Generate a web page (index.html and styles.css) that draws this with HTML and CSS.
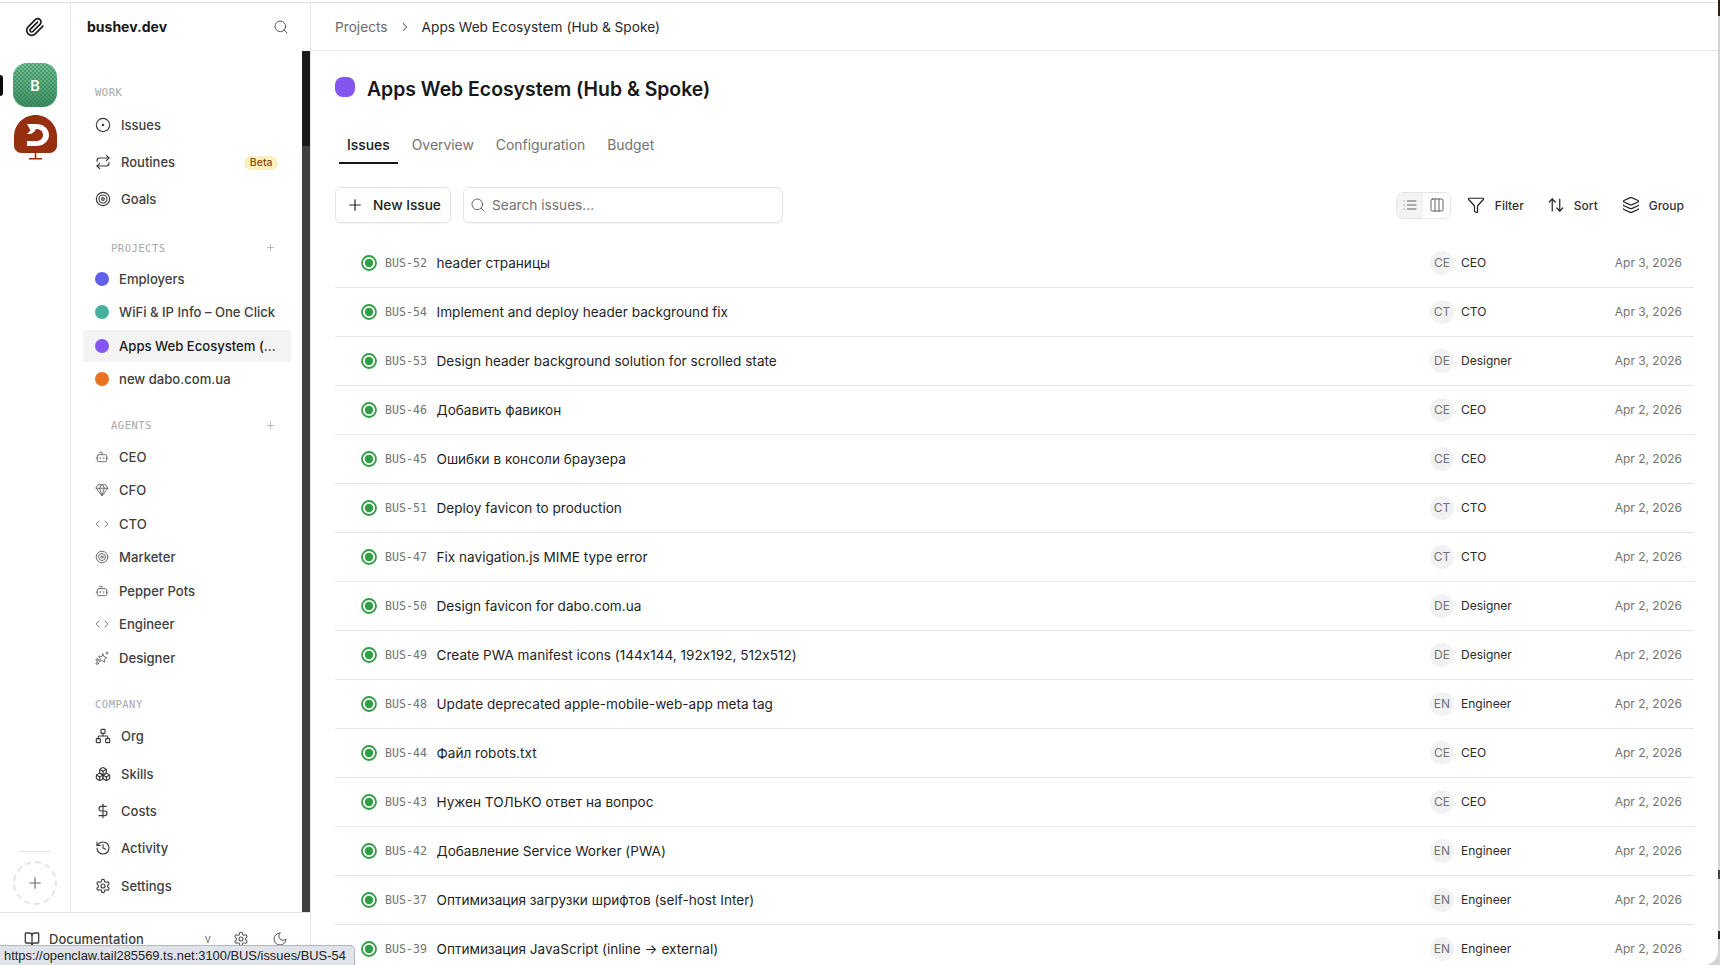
FILE: index.html
```html
<!DOCTYPE html>
<html lang="en">
<head>
<meta charset="utf-8">
<title>Apps Web Ecosystem (Hub &amp; Spoke)</title>
<link rel="stylesheet" href="styles.css">
</head>
<body>
<svg class="defs" aria-hidden="true">
<symbol id="i-clip" viewBox="0 0 24 24"><path d="m21.44 11.05-9.19 9.19a6 6 0 0 1-8.49-8.49l8.57-8.57A4 4 0 1 1 18 8.84l-8.59 8.57a2 2 0 0 1-2.83-2.83l8.49-8.48"/></symbol>
<symbol id="i-search" viewBox="0 0 24 24"><circle cx="11" cy="11" r="8"/><path d="m21 21-4.3-4.3"/></symbol>
<symbol id="i-issues" viewBox="0 0 24 24"><circle cx="12" cy="12" r="10"/><circle cx="12" cy="12" r="1"/></symbol>
<symbol id="i-repeat" viewBox="0 0 24 24"><path d="m17 2 4 4-4 4"/><path d="M3 11v-1a4 4 0 0 1 4-4h14"/><path d="m7 22-4-4 4-4"/><path d="M21 13v1a4 4 0 0 1-4 4H3"/></symbol>
<symbol id="i-target" viewBox="0 0 24 24"><circle cx="12" cy="12" r="10"/><circle cx="12" cy="12" r="6"/><circle cx="12" cy="12" r="2"/></symbol>
<symbol id="i-plus" viewBox="0 0 24 24"><path d="M5 12h14"/><path d="M12 5v14"/></symbol>
<symbol id="i-bot" viewBox="0 0 24 24"><path d="M12 8V4H8"/><rect x="4" y="8" width="16" height="12" rx="2"/><path d="M2 14h2"/><path d="M20 14h2"/><path d="M15 13v2"/><path d="M9 13v2"/></symbol>
<symbol id="i-gem" viewBox="0 0 24 24"><path d="M6 3h12l4 6-10 13L2 9Z"/><path d="M11 3 8 9l4 13 4-13-3-6"/><path d="M2 9h20"/></symbol>
<symbol id="i-code" viewBox="0 0 24 24"><path d="m17 17 5-5-5-5"/><path d="m7 7-5 5 5 5"/></symbol>
<symbol id="i-spark" viewBox="0 0 24 24"><path d="M13.5 5 15.4 9.6 20.4 11.2 16.4 14.2 16.6 19.4 12.4 16.4 7.6 18 9.2 13.2 6.2 9 11.4 9.2Z"/><path d="M20.5 1.5v4"/><path d="M18.5 3.5h4"/><circle cx="3.8" cy="15.2" r="2"/><circle cx="3.8" cy="21" r="2"/></symbol>
<symbol id="i-org" viewBox="0 0 24 24"><rect x="16" y="16" width="6" height="6" rx="1"/><rect x="2" y="16" width="6" height="6" rx="1"/><rect x="9" y="2" width="6" height="6" rx="1"/><path d="M5 16v-3a1 1 0 0 1 1-1h12a1 1 0 0 1 1 1v3"/><path d="M12 12V8"/></symbol>
<symbol id="i-boxes" viewBox="0 0 24 24"><path d="M2.97 12.92A2 2 0 0 0 2 14.63v3.24a2 2 0 0 0 .97 1.71l3 1.8a2 2 0 0 0 2.06 0L12 19v-5.5l-5-3-4.03 2.42Z"/><path d="m7 16.5-4.74-2.85"/><path d="m7 16.5 5-3"/><path d="M7 16.5v5.17"/><path d="M12 13.5V19l3.97 2.38a2 2 0 0 0 2.06 0l3-1.8a2 2 0 0 0 .97-1.71v-3.24a2 2 0 0 0-.97-1.71L17 10.5l-5 3Z"/><path d="m17 16.5-5-3"/><path d="m17 16.5 4.74-2.85"/><path d="M17 16.5v5.17"/><path d="M7.97 4.42A2 2 0 0 0 7 6.13v4.37l5 3 5-3V6.13a2 2 0 0 0-.97-1.71l-3-1.8a2 2 0 0 0-2.06 0l-3 1.8Z"/><path d="M12 8 7.26 5.15"/><path d="m12 8 4.74-2.85"/><path d="M12 13.5V8"/></symbol>
<symbol id="i-dollar" viewBox="0 0 24 24"><path d="M12 2v20"/><path d="M17 5H9.5a3.5 3.5 0 0 0 0 7h5a3.5 3.5 0 0 1 0 7H6"/></symbol>
<symbol id="i-history" viewBox="0 0 24 24"><path d="M3 12a9 9 0 1 0 9-9 9.75 9.75 0 0 0-6.74 2.74L3 8"/><path d="M3 3v5h5"/><path d="M12 7v5l4 2"/></symbol>
<symbol id="i-gear" viewBox="0 0 24 24"><path d="M12.22 2h-.44a2 2 0 0 0-2 2v.18a2 2 0 0 1-1 1.73l-.43.25a2 2 0 0 1-2 0l-.15-.08a2 2 0 0 0-2.73.73l-.22.38a2 2 0 0 0 .73 2.73l.15.1a2 2 0 0 1 1 1.72v.51a2 2 0 0 1-1 1.74l-.15.09a2 2 0 0 0-.73 2.73l.22.38a2 2 0 0 0 2.73.73l.15-.08a2 2 0 0 1 2 0l.43.25a2 2 0 0 1 1 1.73V20a2 2 0 0 0 2 2h.44a2 2 0 0 0 2-2v-.18a2 2 0 0 1 1-1.73l.43-.25a2 2 0 0 1 2 0l.15.08a2 2 0 0 0 2.73-.73l.22-.39a2 2 0 0 0-.73-2.73l-.15-.08a2 2 0 0 1-1-1.74v-.5a2 2 0 0 1 1-1.74l.15-.09a2 2 0 0 0 .73-2.73l-.22-.38a2 2 0 0 0-2.73-.73l-.15.08a2 2 0 0 1-2 0l-.43-.25a2 2 0 0 1-1-1.73V4a2 2 0 0 0-2-2z"/><circle cx="12" cy="12" r="3"/></symbol>
<symbol id="i-book" viewBox="0 0 24 24"><path d="M12 7v14"/><path d="M3 18a1 1 0 0 1-1-1V4a1 1 0 0 1 1-1h5a4 4 0 0 1 4 4 4 4 0 0 1 4-4h5a1 1 0 0 1 1 1v13a1 1 0 0 1-1 1h-6a3 3 0 0 0-3 3 3 3 0 0 0-3-3z"/></symbol>
<symbol id="i-moon" viewBox="0 0 24 24"><path d="M12 3a6 6 0 0 0 9 9 9 9 0 1 1-9-9Z"/></symbol>
<symbol id="i-chev" viewBox="0 0 24 24"><path d="m9 18 6-6-6-6"/></symbol>
<symbol id="i-list" viewBox="0 0 24 24"><path d="M3 12h.01"/><path d="M3 18h.01"/><path d="M3 6h.01"/><path d="M8 12h13"/><path d="M8 18h13"/><path d="M8 6h13"/></symbol>
<symbol id="i-cols" viewBox="0 0 24 24"><rect x="3" y="3" width="18" height="18" rx="2"/><path d="M9 3v18"/><path d="M15 3v18"/></symbol>
<symbol id="i-filter" viewBox="0 0 24 24"><path d="M10 20a1 1 0 0 0 .553.895l2 1A1 1 0 0 0 14 21v-7a2 2 0 0 1 .517-1.341L21.74 4.67A1 1 0 0 0 21 3H3a1 1 0 0 0-.742 1.67l7.225 7.989A2 2 0 0 1 10 14z"/></symbol>
<symbol id="i-sort" viewBox="0 0 24 24"><path d="m21 16-4 4-4-4"/><path d="M17 20V4"/><path d="m3 8 4-4 4 4"/><path d="M7 4v16"/></symbol>
<symbol id="i-layers" viewBox="0 0 24 24"><path d="M12.83 2.18a2 2 0 0 0-1.66 0L2.6 6.08a1 1 0 0 0 0 1.83l8.58 3.91a2 2 0 0 0 1.66 0l8.58-3.9a1 1 0 0 0 0-1.83z"/><path d="M2 12a1 1 0 0 0 .58.91l8.6 3.91a2 2 0 0 0 1.65 0l8.58-3.9A1 1 0 0 0 22 12"/><path d="M2 17a1 1 0 0 0 .58.91l8.6 3.91a2 2 0 0 0 1.65 0l8.58-3.9A1 1 0 0 0 22 17"/></symbol>
<symbol id="i-done" viewBox="0 0 16 16"><circle cx="8" cy="8" r="7" class="done-ring"/><circle cx="8" cy="8" r="4.2" class="done-dot"/></symbol>
</svg>

<div class="top-gap"></div>
<div class="window">
  <div class="left">
    <div class="left-top">
      <div class="rail">
        <svg class="ic rail-clip"><use href="#i-clip"/></svg>
        <div class="co co-b">B</div>
        <svg class="co-d" viewBox="0 0 43 45">
          <path class="d-red" d="M21.5 0C33.4 0 43 9.6 43 21.5v9C43 34.6 39.6 38 35.5 38h-28C3.4 38 0 34.6 0 30.5v-9C0 9.6 9.6 0 21.5 0Z"/>
          <path class="d-red" d="M20.7 37h1.600v6h-1.600zM15 43h13v1.400H15z"/>
          <path class="d-white" d="M13 9h9c7.500 0 13 4.800 13 11s-5.500 11-13 11h-9v-5h9c4.500 0 7-2.600 7-6s-2.500-6-7-6l-1.500 2.500L17 19h-4l3.500-3.500z"/>
        </svg>
        <div class="rail-space"></div>
        <div class="rail-sep"></div>
        <div class="rail-add"><svg class="ic"><use href="#i-plus"/></svg></div>
      </div>
      <aside class="side">
        <div class="side-head">
          <span class="brand">bushev.dev</span>
          <svg class="ic side-search"><use href="#i-search"/></svg>
        </div>
        <div class="side-scroll">
          <nav class="side-nav">
            <div class="label label-work">WORK</div>
            <a class="nav"><svg class="ic"><use href="#i-issues"/></svg>Issues</a>
            <a class="nav"><svg class="ic"><use href="#i-repeat"/></svg>Routines<span class="beta">Beta</span></a>
            <a class="nav"><svg class="ic"><use href="#i-target"/></svg>Goals</a>

            <div class="label label-sub label-projects"><span>PROJECTS</span><svg class="ic"><use href="#i-plus"/></svg></div>
            <a class="item"><span class="dot dot-indigo"></span>Employers</a>
            <a class="item"><span class="dot dot-teal"></span>WiFi &amp; IP Info – One Click</a>
            <a class="item active"><span class="dot dot-violet"></span>Apps Web Ecosystem (…</a>
            <a class="item"><span class="dot dot-orange"></span>new dabo.com.ua</a>

            <div class="label label-sub label-agents"><span>AGENTS</span><svg class="ic"><use href="#i-plus"/></svg></div>
            <a class="item"><svg class="ic"><use href="#i-bot"/></svg>CEO</a>
            <a class="item"><svg class="ic"><use href="#i-gem"/></svg>CFO</a>
            <a class="item"><svg class="ic"><use href="#i-code"/></svg>CTO</a>
            <a class="item"><svg class="ic"><use href="#i-target"/></svg>Marketer</a>
            <a class="item"><svg class="ic"><use href="#i-bot"/></svg>Pepper Pots</a>
            <a class="item"><svg class="ic"><use href="#i-code"/></svg>Engineer</a>
            <a class="item"><svg class="ic"><use href="#i-spark"/></svg>Designer</a>

            <div class="label label-company">COMPANY</div>
            <a class="nav"><svg class="ic"><use href="#i-org"/></svg>Org</a>
            <a class="nav"><svg class="ic"><use href="#i-boxes"/></svg>Skills</a>
            <a class="nav"><svg class="ic"><use href="#i-dollar"/></svg>Costs</a>
            <a class="nav"><svg class="ic"><use href="#i-history"/></svg>Activity</a>
            <a class="nav"><svg class="ic"><use href="#i-gear"/></svg>Settings</a>
          </nav>
          <div class="track"><div class="thumb"></div></div>
        </div>
      </aside>
    </div>
    <footer class="left-foot">
      <svg class="ic"><use href="#i-book"/></svg>
      <span class="doc">Documentation</span>
      <span class="ver">v</span>
      <svg class="ic foot-gear"><use href="#i-gear"/></svg>
      <svg class="ic foot-moon"><use href="#i-moon"/></svg>
    </footer>
  </div>

  <main class="main">
    <header class="crumbs">
      <span class="crumb">Projects</span>
      <svg class="ic crumb-chev"><use href="#i-chev"/></svg>
      <span class="crumb-now">Apps Web Ecosystem (Hub &amp; Spoke)</span>
    </header>
    <section class="content">
      <div class="title-row">
        <span class="swatch"></span>
        <h1 class="title">Apps Web Ecosystem (Hub &amp; Spoke)</h1>
      </div>
      <div class="tabs">
        <span class="tab on">Issues</span>
        <span class="tab">Overview</span>
        <span class="tab">Configuration</span>
        <span class="tab">Budget</span>
      </div>
      <div class="toolbar">
        <button class="btn-new"><svg class="ic"><use href="#i-plus"/></svg>New Issue</button>
        <div class="search"><svg class="ic"><use href="#i-search"/></svg><span>Search issues...</span></div>
        <div class="tools">
          <div class="toggle">
            <span class="tg on"><svg class="ic"><use href="#i-list"/></svg></span>
            <span class="tg"><svg class="ic"><use href="#i-cols"/></svg></span>
          </div>
          <span class="tool tool-filter"><svg class="ic"><use href="#i-filter"/></svg>Filter</span>
          <span class="tool tool-sort"><svg class="ic"><use href="#i-sort"/></svg>Sort</span>
          <span class="tool tool-group"><svg class="ic"><use href="#i-layers"/></svg>Group</span>
        </div>
      </div>
      <div class="rows">
        <div class="row"><svg class="st"><use href="#i-done"/></svg><span class="id">BUS-52</span><span class="t">header страницы</span><span class="av">CE</span><span class="who">CEO</span><span class="date">Apr 3, 2026</span></div>
        <div class="row"><svg class="st"><use href="#i-done"/></svg><span class="id">BUS-54</span><span class="t">Implement and deploy header background fix</span><span class="av">CT</span><span class="who">CTO</span><span class="date">Apr 3, 2026</span></div>
        <div class="row"><svg class="st"><use href="#i-done"/></svg><span class="id">BUS-53</span><span class="t">Design header background solution for scrolled state</span><span class="av">DE</span><span class="who">Designer</span><span class="date">Apr 3, 2026</span></div>
        <div class="row"><svg class="st"><use href="#i-done"/></svg><span class="id">BUS-46</span><span class="t">Добавить фавикон</span><span class="av">CE</span><span class="who">CEO</span><span class="date">Apr 2, 2026</span></div>
        <div class="row"><svg class="st"><use href="#i-done"/></svg><span class="id">BUS-45</span><span class="t">Ошибки в консоли браузера</span><span class="av">CE</span><span class="who">CEO</span><span class="date">Apr 2, 2026</span></div>
        <div class="row"><svg class="st"><use href="#i-done"/></svg><span class="id">BUS-51</span><span class="t">Deploy favicon to production</span><span class="av">CT</span><span class="who">CTO</span><span class="date">Apr 2, 2026</span></div>
        <div class="row"><svg class="st"><use href="#i-done"/></svg><span class="id">BUS-47</span><span class="t">Fix navigation.js MIME type error</span><span class="av">CT</span><span class="who">CTO</span><span class="date">Apr 2, 2026</span></div>
        <div class="row"><svg class="st"><use href="#i-done"/></svg><span class="id">BUS-50</span><span class="t">Design favicon for dabo.com.ua</span><span class="av">DE</span><span class="who">Designer</span><span class="date">Apr 2, 2026</span></div>
        <div class="row"><svg class="st"><use href="#i-done"/></svg><span class="id">BUS-49</span><span class="t">Create PWA manifest icons (144x144, 192x192, 512x512)</span><span class="av">DE</span><span class="who">Designer</span><span class="date">Apr 2, 2026</span></div>
        <div class="row"><svg class="st"><use href="#i-done"/></svg><span class="id">BUS-48</span><span class="t">Update deprecated apple-mobile-web-app meta tag</span><span class="av">EN</span><span class="who">Engineer</span><span class="date">Apr 2, 2026</span></div>
        <div class="row"><svg class="st"><use href="#i-done"/></svg><span class="id">BUS-44</span><span class="t">Файл robots.txt</span><span class="av">CE</span><span class="who">CEO</span><span class="date">Apr 2, 2026</span></div>
        <div class="row"><svg class="st"><use href="#i-done"/></svg><span class="id">BUS-43</span><span class="t">Нужен ТОЛЬКО ответ на вопрос</span><span class="av">CE</span><span class="who">CEO</span><span class="date">Apr 2, 2026</span></div>
        <div class="row"><svg class="st"><use href="#i-done"/></svg><span class="id">BUS-42</span><span class="t">Добавление Service Worker (PWA)</span><span class="av">EN</span><span class="who">Engineer</span><span class="date">Apr 2, 2026</span></div>
        <div class="row"><svg class="st"><use href="#i-done"/></svg><span class="id">BUS-37</span><span class="t">Оптимизация загрузки шрифтов (self-host Inter)</span><span class="av">EN</span><span class="who">Engineer</span><span class="date">Apr 2, 2026</span></div>
        <div class="row"><svg class="st"><use href="#i-done"/></svg><span class="id">BUS-39</span><span class="t">Оптимизация JavaScript (inline → external)</span><span class="av">EN</span><span class="who">Engineer</span><span class="date">Apr 2, 2026</span></div>
      </div>
    </section>
  </main>
</div>
<div class="status-url">https://openclaw.tail285569.ts.net:3100/BUS/issues/BUS-54</div>
<div class="edge-mark edge-mark-top"></div>
<div class="edge-mark edge-mark-mid"></div>
<div class="edge-mark edge-mark-low"></div>
</body>
</html>
```
FILE: styles.css
```css
* { box-sizing: border-box; }
html, body { margin: 0; height: 100%; overflow: hidden; background: #d4d4d4; }
body { font-family: Inter, "Liberation Sans", sans-serif; font-feature-settings: "calt" 0; color: #1a1a1a; position: relative; }
.defs { position: absolute; width: 0; height: 0; }
.ic { width: 16px; height: 16px; fill: none; stroke: currentColor; stroke-width: 2; stroke-linecap: round; stroke-linejoin: round; flex: none; }

.top-gap { height: 2px; width: 1718px; background: #fff; }
.window { display: flex; height: 963px; width: 1718px; border-top: 1px solid #e0e0e0; border-bottom-right-radius: 14px; overflow: hidden; background: #fff; }

.left { width: 311px; flex: none; display: flex; flex-direction: column; border-right: 1px solid #e5e5e5; }
.left-top { height: 910px; display: flex; border-bottom: 1px solid #e3e3e3; }

.rail { width: 71px; flex: none; border-right: 1px solid #e5e5e5; display: flex; flex-direction: column; align-items: center; position: relative; }
.rail::before { content: ""; position: absolute; left: 0; top: 72px; width: 3px; height: 21px; background: #0a0a0a; border-radius: 0 3px 3px 0; }
.rail-clip { width: 20px; height: 20px; margin-top: 14px; color: #1a1a1a; stroke-width: 2; }
.co { width: 44px; height: 44px; border-radius: 14px; margin-top: 26px; display: flex; align-items: center; justify-content: center; color: #fff; font-size: 14.5px; font-weight: 600;
  background-color: #4fa074;
  background-image: radial-gradient(circle, rgba(40,110,70,.42) 1px, transparent 1.2px), radial-gradient(circle, rgba(40,110,70,.42) 1px, transparent 1.2px), linear-gradient(#72c496, #3f9163);
  background-size: 4px 4px, 4px 4px, 100% 100%;
  background-position: 0 0, 2px 2px, 0 0; }
.co-d { width: 43px; height: 45px; margin-top: 8px; }
.d-red { fill: #952f10; }
.d-white { fill: #fff; }
.rail-space { flex: 1; }
.rail-sep { width: 32px; height: 1px; background: #e5e5e5; margin-bottom: 9px; }
.rail-add { width: 44px; height: 44px; border-radius: 50%; border: 2px dashed #e3e3e3; display: flex; align-items: center; justify-content: center; color: #6b6b6b; margin-bottom: 7px; }
.rail-add .ic { width: 18px; height: 18px; stroke-width: 1.5; }

.side { flex: 1; min-width: 0; display: flex; flex-direction: column; }
.side-head { height: 48px; flex: none; display: flex; align-items: center; justify-content: space-between; padding: 0 21px 1px 16px; }
.brand { font-size: 14px; font-weight: 700; color: #171717; }
.side-search { width: 16px; height: 16px; color: #555; stroke-width: 1.5; }
.side-scroll { flex: 1; min-height: 0; display: flex; }
.side-nav { flex: 1; min-width: 0; padding: 0 11px 0 12px; }
.track { width: 8px; flex: none; background: #404040; }
.thumb { height: 95px; background: #1a1a1a; }

.label { font-family: "DejaVu Sans Mono", monospace; font-size: 10.5px; letter-spacing: .5px; color: #a8a8a8; height: 14px; line-height: 14px; padding-left: 12px; }
.label-sub { display: flex; justify-content: space-between; align-items: center; padding: 0 15px 0 28px; }
.label-sub .ic { width: 11px; height: 11px; stroke-width: 1.6; color: #a3a3a3; }
.label-work { margin-top: 34px; margin-bottom: 7px; }
.label-projects { margin-top: 22.5px; margin-bottom: 7.5px; }
.label-agents { margin-top: 22.3px; margin-bottom: 7.5px; }
.label-company { margin-top: 22.7px; margin-bottom: 6.4px; }

.nav { height: 37.4px; display: flex; align-items: center; gap: 10px; padding-left: 12px; font-size: 13px; color: #404040; font-weight: 450; }
.nav .ic { stroke-width: 1.7; color: #3a3a3a; }
.beta { margin-left: auto; margin-right: 13px; margin-top: 2px; background: #fbf0bf; color: #8a4a12; font-size: 10.5px; font-weight: 500; height: 14px; line-height: 14px; padding: 0 5.5px; border-radius: 7px; }
.item { height: 33.5px; display: flex; align-items: center; gap: 10px; padding-left: 12px; font-size: 13.1px; color: #404040; font-weight: 450; white-space: nowrap; }
.item .ic { width: 14px; height: 14px; stroke-width: 1.6; color: #666; }
.item.active { background: #f3f3f3; color: #1a1a1a; height: 32px; margin: .75px 0; }
.dot { width: 14px; height: 14px; border-radius: 50%; flex: none; }
.dot-indigo { background: #6160ea; }
.dot-teal { background: #45b09e; }
.dot-violet { background: #8256ef; }
.dot-orange { background: #e97323; }

.left-foot { flex: 1; display: flex; align-items: center; padding: 0 0 0 24px; color: #404040; font-size: 13px; }
.doc { margin-left: 9px; font-weight: 450; }
.ver { margin-left: auto; font-size: 11px; color: #777; }
.foot-gear { margin-left: 22px; color: #555; stroke-width: 1.6; }
.foot-moon { margin: 0 22px 0 23px; color: #555; stroke-width: 1.5; }

.main { flex: 1; min-width: 0; display: flex; flex-direction: column; }
.crumbs { height: 48px; flex: none; display: flex; align-items: center; gap: 10px; padding-left: 24px; border-bottom: 1px solid #e5e5e5; font-size: 13.7px; }
.crumb { color: #6b6b6b; }
.crumb-chev { width: 14px; height: 14px; color: #555; stroke-width: 1.8; }
.crumb-now { color: #2a2a2a; }

.content { padding: 0 24px 0 24px; flex: 1; min-height: 0; }
.title-row { display: flex; align-items: center; gap: 12px; margin-top: 25px; height: 26px; }
.swatch { width: 20px; height: 20px; border-radius: 8px; background: #8256ef; margin-top: -4px; }
.title { margin: 0; font-size: 19.4px; line-height: 26px; font-weight: 600; color: #171717; }

.tabs { display: flex; margin-top: 24px; height: 38px; }
.tab { padding: 0 8px; margin: 0 6px 0 0; font-size: 13.9px; color: #737373; border-bottom: 2px solid transparent; display: flex; align-items: center; padding-top: 1px; }
.tab.on { color: #171717; border-bottom-color: #171717; margin-left: 4px; font-weight: 500; }
.toolbar { display: flex; align-items: center; margin-top: 23px; height: 36px; }
.btn-new { height: 36px; width: 116px; display: flex; align-items: center; gap: 9px; padding: 0 0 0 10px; background: #fff; border: 1px solid #e3e3e3; border-radius: 6px; box-shadow: 0 1px 1px rgba(0,0,0,.04); font: 500 13.7px Inter, sans-serif; font-feature-settings: "calt" 0; color: #222; }
.btn-new .ic { width: 18px; height: 18px; stroke-width: 1.6; }
.search { margin-left: 12px; width: 320px; height: 36px; border: 1px solid #e3e3e3; border-radius: 6px; display: flex; align-items: center; gap: 6px; padding-left: 6px; box-shadow: 0 1px 1px rgba(0,0,0,.04); font-size: 13.7px; color: #737373; }
.search .ic { stroke-width: 1.5; color: #666; }
.tools { margin-left: auto; display: flex; align-items: center; padding-right: 10px; font-size: 12px; font-weight: 500; color: #333; }
.toggle { display: flex; width: 55px; height: 27px; border: 1px solid #e5e5e5; border-radius: 7px; overflow: hidden; }
.tg { flex: 1; display: flex; align-items: center; justify-content: center; color: #555; }
.tg.on { background: #f3f3f3; }
.tg .ic { stroke-width: 1.4; }
.tool { display: flex; align-items: center; gap: 9px; }
.tool .ic { width: 18px; height: 18px; stroke-width: 1.6; color: #222; }
.tool-filter { margin-left: 16px; gap: 10px; }
.tool-sort { margin-left: 23px; }
.tool-group { margin-left: 24px; }

.rows { margin-top: 16px; width: 1359px; }
.row { height: 49px; display: flex; align-items: center; padding: 0 12px 1px 26px; border-bottom: 1px solid #e5e5e5; }
.st { width: 16px; height: 16px; flex: none; }
.done-ring { fill: none; stroke: #2f9e44; stroke-width: 1.8; }
.done-dot { fill: #2f9e44; }
.id { margin-left: 8px; width: 51.5px; flex: none; font-family: "DejaVu Sans Mono", monospace; font-size: 11.6px; color: #737373; }
.t { flex: 1; min-width: 0; font-size: 13.6px; color: #1f1f1f; white-space: nowrap; }
.av { width: 24px; height: 24px; border-radius: 50%; background: #f2f2f2; color: #737373; font-size: 12px; display: flex; align-items: center; justify-content: center; flex: none; }
.who { margin-left: 7px; width: 121px; flex: none; font-size: 12px; color: #2a2a2a; }
.date { width: 100px; flex: none; text-align: right; font-size: 12px; color: #737373; }

.status-url { position: absolute; left: 0; bottom: 0; height: 20px; width: 355px; padding-left: 4px; background: #e0e3ea; border: 1px solid #b4b7bd; border-left: 0; border-bottom: 0; border-radius: 0 5px 0 0; font: 12.9px/20px "Liberation Sans", sans-serif; color: #222; white-space: nowrap; }
.edge-mark { position: absolute; right: 0; width: 2px; }
.edge-mark-top { top: 0; height: 16px; background: #2c2012; }
.edge-mark-mid { top: 870px; height: 9px; background: #444; }
.edge-mark-low { top: 931px; height: 8px; background: #222; }
```
